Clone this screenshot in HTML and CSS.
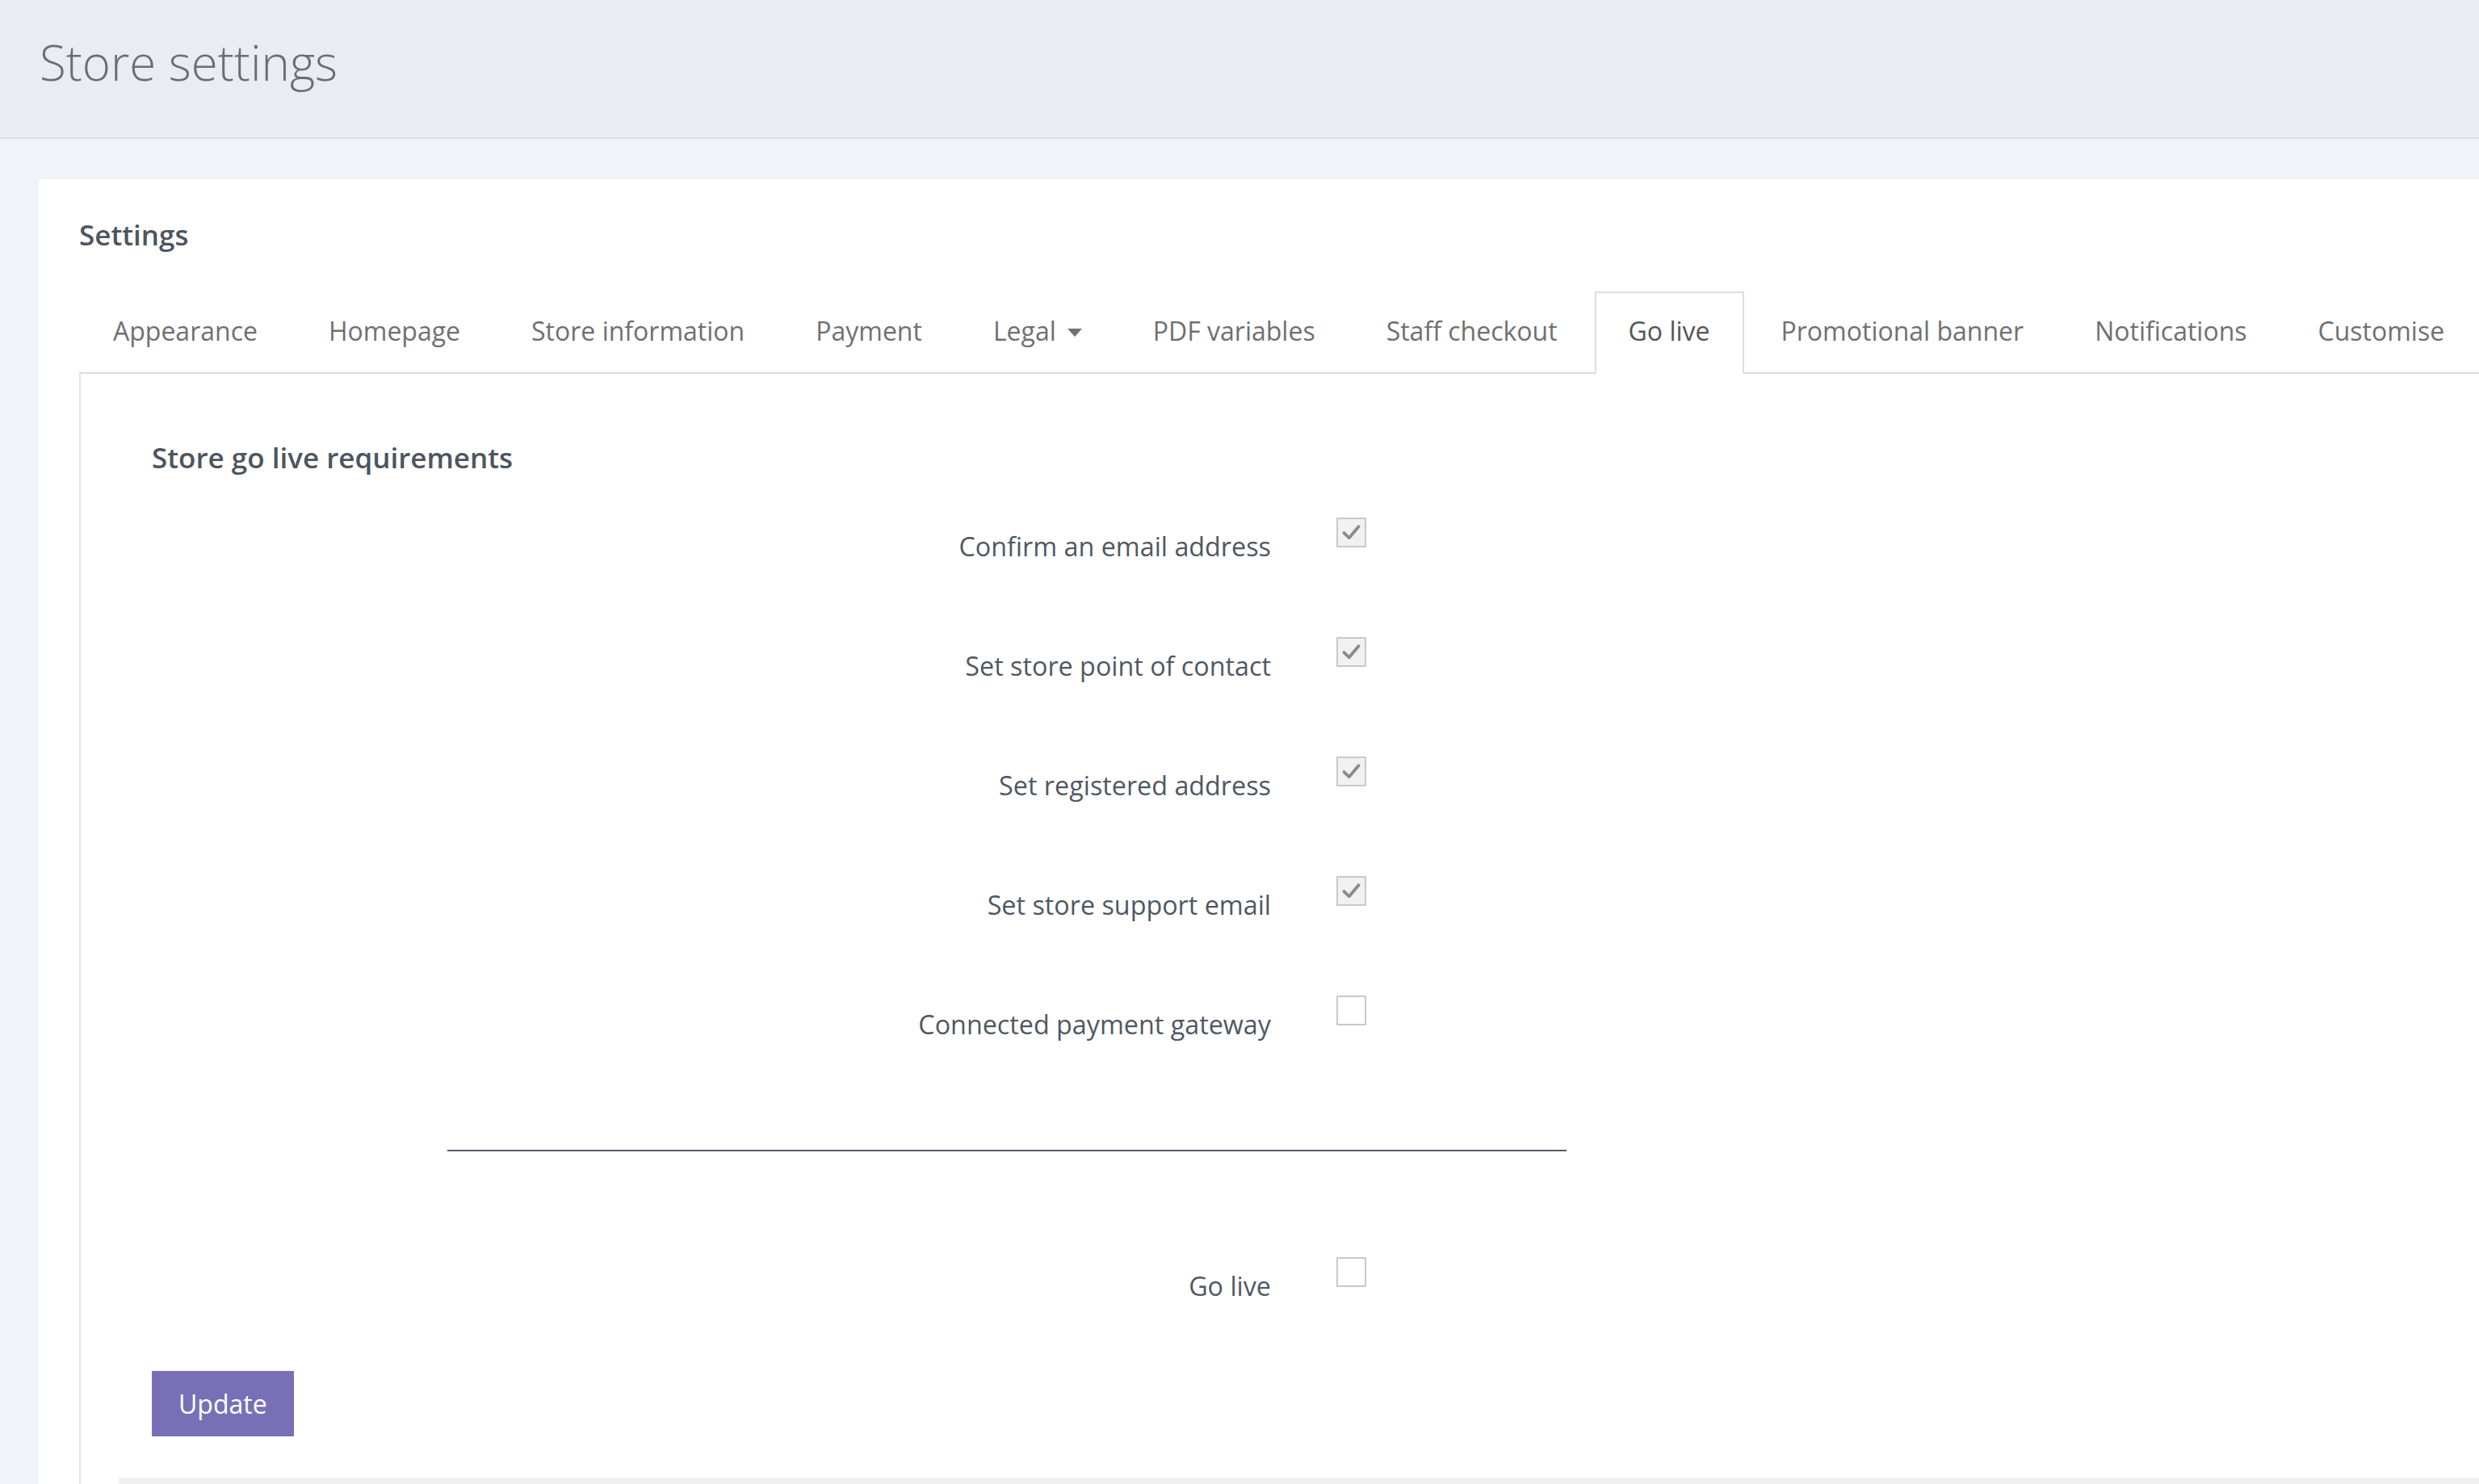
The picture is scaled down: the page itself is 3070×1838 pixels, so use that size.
FILE: index.html
```html
<!DOCTYPE html>
<html lang="en">
<head>
<meta charset="utf-8">
<title>Store settings</title>
<link rel="stylesheet" href="styles.css">
</head>
<body>
<header class="page-header">
  <h1 class="page-title">Store settings</h1>
</header>
<main class="page-body">
  <section class="card">
    <h2 class="card-title">Settings</h2>
    <ul class="tabs">
      <li class="tab">Appearance</li>
      <li class="tab">Homepage</li>
      <li class="tab">Store information</li>
      <li class="tab">Payment</li>
      <li class="tab">Legal<span class="caret"></span></li>
      <li class="tab">PDF variables</li>
      <li class="tab">Staff checkout</li>
      <li class="tab active">Go live</li>
      <li class="tab">Promotional banner</li>
      <li class="tab">Notifications</li>
      <li class="tab">Customise</li>
    </ul>
    <div class="panel">
      <h3 class="panel-title">Store go live requirements</h3>
      <div class="row">
        <label class="row-label">Confirm an email address</label>
        <span class="check checked"><svg class="tick" viewBox="0 0 24 24"><path d="M4 12.5 L9.5 18 L20 5.5" fill="none" stroke="#8b8b8b" stroke-width="3.4" stroke-linecap="round" stroke-linejoin="round"/></svg></span>
      </div>
      <div class="row">
        <label class="row-label">Set store point of contact</label>
        <span class="check checked"><svg class="tick" viewBox="0 0 24 24"><path d="M4 12.5 L9.5 18 L20 5.5" fill="none" stroke="#8b8b8b" stroke-width="3.4" stroke-linecap="round" stroke-linejoin="round"/></svg></span>
      </div>
      <div class="row">
        <label class="row-label">Set registered address</label>
        <span class="check checked"><svg class="tick" viewBox="0 0 24 24"><path d="M4 12.5 L9.5 18 L20 5.5" fill="none" stroke="#8b8b8b" stroke-width="3.4" stroke-linecap="round" stroke-linejoin="round"/></svg></span>
      </div>
      <div class="row">
        <label class="row-label">Set store support email</label>
        <span class="check checked"><svg class="tick" viewBox="0 0 24 24"><path d="M4 12.5 L9.5 18 L20 5.5" fill="none" stroke="#8b8b8b" stroke-width="3.4" stroke-linecap="round" stroke-linejoin="round"/></svg></span>
      </div>
      <div class="row">
        <label class="row-label">Connected payment gateway</label>
        <span class="check"></span>
      </div>
      <hr class="divider">
      <div class="row row-last">
        <label class="row-label">Go live</label>
        <span class="check"></span>
      </div>
      <button class="btn" type="button">Update</button>
      <div class="panel-foot"></div>
    </div>
  </section>
</main>
</body>
</html>
```
FILE: styles.css
```css
* { box-sizing: border-box; }

html, body {
  margin: 0;
  padding: 0;
}

body {
  background: #f2f3f8;
  font-family: "Open Sans", "Noto Sans", "Liberation Sans", sans-serif;
  color: #4f5863;
  overflow: hidden;
}

.page-header {
  height: 172px;
  background: #e9ecf1;
  border-bottom: 2px solid #dcdfe5;
  padding: 36px 0 0 49px;
}

.page-title {
  margin: 0;
  font-size: 60px;
  font-weight: 300;
  line-height: 82px;
  color: #6b6e73;
}

.page-body {
  padding: 50px 0 0 48px;
}

.card {
  background: #fff;
  padding: 46px 0 0 50px;
  min-height: 1616px;
}

.card-title {
  margin: 0 0 47px;
  font-size: 35px;
  font-weight: 600;
  line-height: 46px;
  color: #4d5560;
}

.tabs {
  list-style: none;
  margin: 0;
  padding: 0;
  display: flex;
  border-bottom: 2px solid #dddddd;
  height: 102px;
}

.tab {
  height: 100px;
  padding: 24px 40px 28px;
  border: 2px solid transparent;
  border-bottom: 0;
  margin-right: 4px;
  font-size: 32px;
  line-height: 46px;
  color: #707070;
  white-space: nowrap;
  display: flex;
  align-items: flex-start;
}

.tab.active {
  border-color: #dddddd;
  background: #fff;
  color: #555555;
  height: 102px;
}

.caret {
  display: inline-block;
  width: 0;
  height: 0;
  margin: 20px 0 0 14px;
  border-top: 10px solid #707070;
  border-left: 9px solid transparent;
  border-right: 9px solid transparent;
}

.panel {
  border-left: 2px solid #e6e6e6;
  padding: 81px 0 0 88px;
}

.panel-title {
  margin: 0 0 51px;
  font-size: 35px;
  font-weight: 600;
  line-height: 46px;
  color: #4d5560;
}

.row {
  display: grid;
  grid-template-columns: 1386px 37px;
  column-gap: 81px;
  align-items: start;
  height: 58px;
  margin-bottom: 90px;
}

.row-label {
  padding-top: 12px;
  font-size: 32.3px;
  line-height: 46px;
  text-align: right;
  color: #4f5863;
}

.check {
  width: 37px;
  height: 37px;
  border: 2px solid #c9c9c9;
  border-radius: 1px;
  background: #fff;
  display: flex;
  align-items: center;
  justify-content: center;
}

.check.checked {
  background: #f1f1f1;
}

.tick {
  width: 27px;
  height: 27px;
  flex: none;
}

.divider {
  margin: 133px 0 0 366px;
  width: 1386px;
  height: 2px;
  border: 0;
  background: #535b66;
}

.row-last {
  margin-top: 131px;
  margin-bottom: 83px;
}

.btn {
  display: block;
  border: 0;
  margin: 0;
  background: #7870b7;
  color: #fff;
  font-family: inherit;
  font-size: 32px;
  line-height: 45px;
  padding: 18px 33px;
  cursor: pointer;
}

.panel-foot {
  margin: 51px 0 0 -41px;
  height: 12px;
  background: #f0f0f2;
}
```
